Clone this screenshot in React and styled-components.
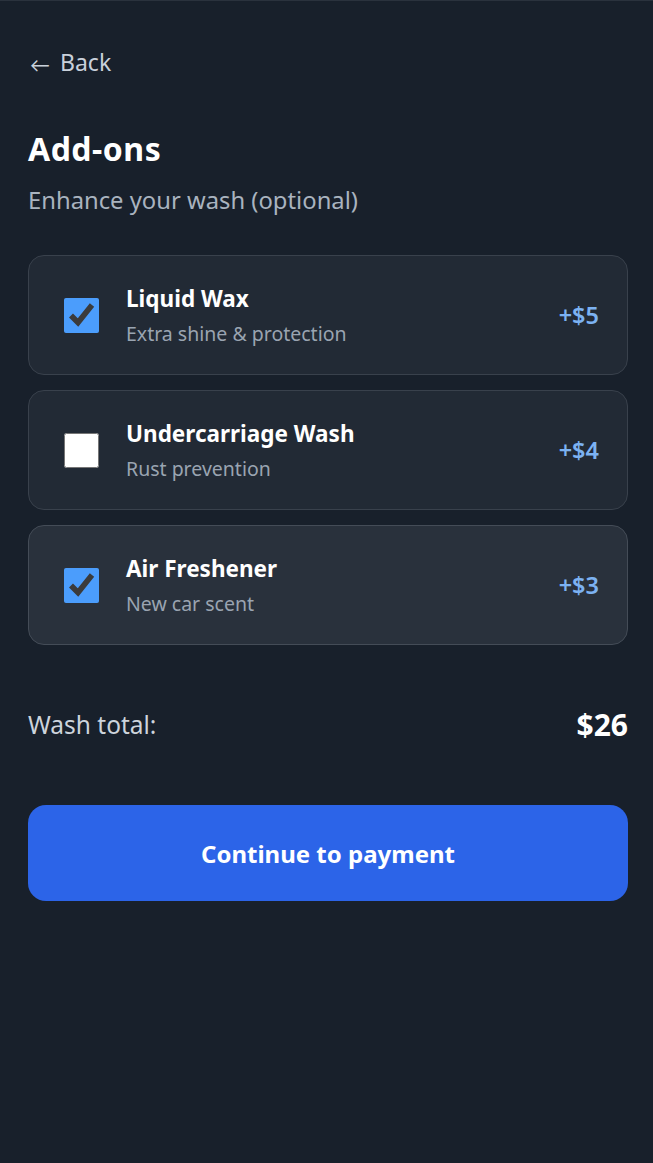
import React, { useState } from "react";
import styled, { createGlobalStyle } from "styled-components";

const Global = createGlobalStyle`
  html, body { margin: 0; padding: 0; background: #18202b; }
  body { font-family: "Noto Sans", Lato, sans-serif; -webkit-font-smoothing: antialiased; }
  * { box-sizing: border-box; }
`;

const Page = styled.div`
  min-height: 1163px;
  background: #18202b;
  border-top: 1px solid #2a323d;
  padding: 44px 25px 0 28px;
  display: flex;
  flex-direction: column;
`;

const BackLink = styled.button`
  align-self: flex-start;
  display: flex;
  align-items: center;
  gap: 10px;
  background: none;
  border: none;
  padding: 0 0 0 2px;
  color: #c9d1db;
  font: inherit;
  font-size: 23px;
  line-height: 34px;
  cursor: pointer;
`;

const Arrow = styled.span`
  font-size: 20px;
  line-height: 1;
  padding-top: 5px;
`;

const Title = styled.h1`
  margin: 50px 0 0;
  color: #ffffff;
  font-size: 32px;
  font-weight: 700;
  line-height: 40px;
  letter-spacing: 0.5px;
`;

const Subtitle = styled.p`
  margin: 16px 0 0;
  color: #a9b3bf;
  font-size: 23.8px;
  line-height: 30px;
`;

const List = styled.div`
  margin-top: 40px;
  display: flex;
  flex-direction: column;
  gap: 15px;
`;

const Card = styled.label`
  height: 120px;
  display: flex;
  align-items: center;
  padding: 0 28px 0 35px;
  background: ${(p) => (p.$hover ? "#29313c" : "#222a35")};
  border: 1px solid ${(p) => (p.$hover ? "#444c57" : "#39414c")};
  border-radius: 16px;
  cursor: pointer;
`;

const Check = styled.input`
  width: 35px;
  height: 35px;
  margin: 0 27px 0 0;
  accent-color: #4b9dfc;
  flex: none;
`;

const Info = styled.div`
  flex: 1;
  display: flex;
  flex-direction: column;
  gap: 7px;
`;

const Name = styled.span`
  color: #ffffff;
  font-size: 22.5px;
  font-weight: 700;
  line-height: 30px;
`;

const Desc = styled.span`
  color: #9aa4b1;
  font-size: 19.5px;
  line-height: 26px;
`;

const Price = styled.span`
  color: #7cb2f2;
  font-size: 23.5px;
  font-weight: 600;
`;

const TotalRow = styled.div`
  margin-top: 59px;
  display: flex;
  justify-content: space-between;
  align-items: center;
`;

const TotalLabel = styled.span`
  color: #cdd4dc;
  font-size: 24.5px;
`;

const TotalValue = styled.span`
  color: #ffffff;
  font-size: 30px;
  font-weight: 700;
`;

const PayButton = styled.button`
  margin-top: 60px;
  height: 96px;
  border: none;
  border-radius: 18px;
  background: #2c64e8;
  color: #ffffff;
  font: inherit;
  font-size: 24px;
  font-weight: 700;
  cursor: pointer;
`;

const addons = [
  { id: "wax", name: "Liquid Wax", desc: "Extra shine & protection", price: 5 },
  { id: "under", name: "Undercarriage Wash", desc: "Rust prevention", price: 4 },
  { id: "fresh", name: "Air Freshener", desc: "New car scent", price: 3 },
];

export default function App() {
  const [sel, setSel] = useState({ wax: true, under: false, fresh: true });
  const base = 18;
  const total = base + addons.reduce((s, a) => s + (sel[a.id] ? a.price : 0), 0);
  return (
    <>
      <Global />
      <Page>
        <BackLink>
          <Arrow>←</Arrow>
          Back
        </BackLink>
        <Title>Add-ons</Title>
        <Subtitle>Enhance your wash (optional)</Subtitle>
        <List>
          {addons.map((a, i) => (
            <Card key={a.id} $hover={i === 2}>
              <Check
                type="checkbox"
                checked={sel[a.id]}
                onChange={() => setSel({ ...sel, [a.id]: !sel[a.id] })}
              />
              <Info>
                <Name>{a.name}</Name>
                <Desc>{a.desc}</Desc>
              </Info>
              <Price>+${a.price}</Price>
            </Card>
          ))}
        </List>
        <TotalRow>
          <TotalLabel>Wash total:</TotalLabel>
          <TotalValue>${total}</TotalValue>
        </TotalRow>
        <PayButton>Continue to payment</PayButton>
      </Page>
    </>
  );
}
